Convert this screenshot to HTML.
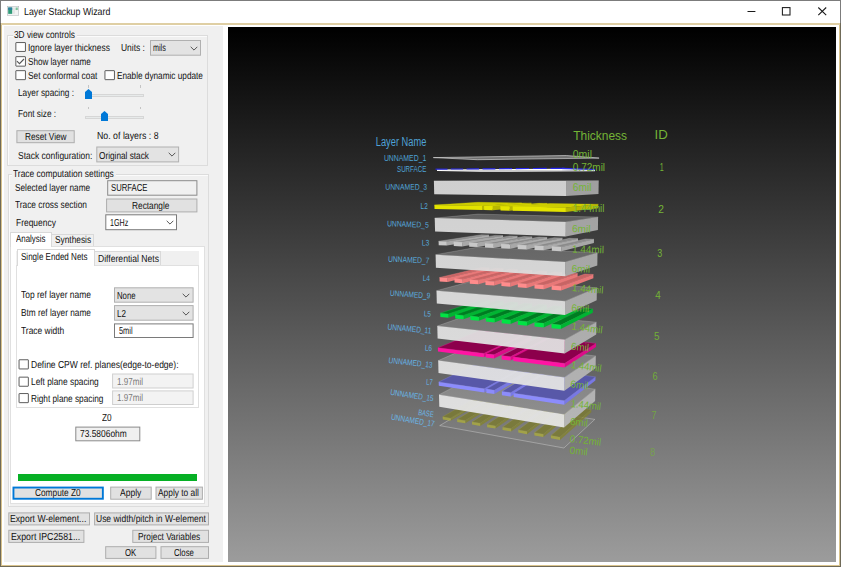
<!DOCTYPE html>
<html><head><meta charset="utf-8"><title>Layer Stackup Wizard</title>
<style>
html,body{margin:0;padding:0;}
body{width:841px;height:567px;position:relative;overflow:hidden;background:#fff;font-family:"Liberation Sans",sans-serif;}
.b{position:absolute;box-sizing:border-box;}
.t{position:absolute;white-space:nowrap;transform-origin:0 50%;display:block;line-height:12px;text-rendering:geometricPrecision;}
#frame{position:absolute;left:0;top:0;width:841px;height:567px;box-sizing:border-box;border:1px solid #7c7c7c;}
#client{position:absolute;left:0;top:23px;width:841px;height:544px;box-sizing:border-box;border:1px solid #6f6a58;box-shadow:inset 0 0 0 1px #d9c38c;}
#titleline{position:absolute;left:1px;top:23px;width:839px;height:2px;background:#dfcfa4;}
#panel{position:absolute;left:4.3px;top:26px;width:219.2px;height:536px;background:#f0f0f0;}
#view{position:absolute;left:228px;top:27px;width:608px;height:535px;background:linear-gradient(#000,#9c9c9c);}
.gb{border:1px solid #dcdcdc;box-shadow:inset 1px 1px 0 #fbfbfb;}
.combo{background:#e3e3e3;border:1px solid #b2b2b2;}
.btn{background:#e1e1e1;border:1px solid #adadad;}
.btn.focus{border:2px solid #0078d7;}
.edit{background:#fff;border:1px solid #7a7a7a;}
.ro{background:#f0f0f0;border:1px solid #8a8a8a;}
.dis{background:#f3f3f3;border:1px solid #cfcfcf;}
.cb{background:#fff;border:1px solid #505050;}
.pane{background:#fff;border:1px solid #e0e0e0;}
.tab{background:#f0f0f0;border:1px solid #d9d9d9;border-bottom:none;}
.tab.sel{background:#fff;}
svg text{font-family:"Liberation Sans",sans-serif;}
</style></head><body>
<div id="frame"></div><div id="client"></div><div id="titleline"></div>
<div id="panel"></div>
<div id="view"></div>
<svg class="b" style="left:7px;top:6.2px" width="12" height="9.6" viewBox="0 0 12 10" preserveAspectRatio="none">
<rect x="0.25" y="0.25" width="11.5" height="9.5" fill="#f2f4f4" stroke="#a8b0b4" stroke-width="0.5"/>
<rect x="1.2" y="1.6" width="4" height="6.6" fill="#2e9a78"/><rect x="1.2" y="1.6" width="4" height="2.5" fill="#2f7fa0"/>
<rect x="6" y="1.6" width="2" height="6.6" fill="#e4e6e6"/><rect x="8.6" y="1.6" width="2.2" height="2.6" fill="#7cc49a"/>
</svg>
<svg class="b" style="left:740px;top:0" width="100" height="23" viewBox="0 0 100 23">
<path d="M7.5 11.5 H15.4" stroke="#1a1a1a" stroke-width="1.05" fill="none"/>
<rect x="42.4" y="7.6" width="7.6" height="7.4" stroke="#1a1a1a" stroke-width="1.05" fill="none"/>
<path d="M78.3 7.5 L86.2 15.2 M86.2 7.5 L78.3 15.2" stroke="#1a1a1a" stroke-width="1.05" fill="none"/>
</svg>
<div class="b gb" style="left:7.0px;top:34.5px;width:201.0px;height:131.0px;"></div>
<div class="b " style="left:12.5px;top:30.0px;width:64.5px;height:10.0px;background:#f0f0f0"></div>
<div class="b " style="left:85.3px;top:93.9px;width:58.3px;height:3.1px;background:#e7eaea;border:1px solid #d6d6d6;box-sizing:border-box"></div>
<div class="b " style="left:88.0px;top:84.9px;width:0.7px;height:2.8px;background:#c4c4c4"></div>
<div class="b " style="left:140.0px;top:84.9px;width:0.7px;height:2.8px;background:#c4c4c4"></div>
<svg class="b" style="left:85.3px;top:88.9px" width="7" height="10.4" viewBox="0 0 7 10.4"><path d="M3.5 0 L7 3 V10.4 H0 V3 Z" fill="#0078d7"/></svg>
<div class="b " style="left:85.3px;top:115.6px;width:58.3px;height:3.1px;background:#e7eaea;border:1px solid #d6d6d6;box-sizing:border-box"></div>
<div class="b " style="left:88.0px;top:106.6px;width:0.7px;height:2.8px;background:#c4c4c4"></div>
<div class="b " style="left:140.0px;top:106.6px;width:0.7px;height:2.8px;background:#c4c4c4"></div>
<svg class="b" style="left:101.4px;top:110.6px" width="7" height="10.4" viewBox="0 0 7 10.4"><path d="M3.5 0 L7 3 V10.4 H0 V3 Z" fill="#0078d7"/></svg>
<div class="b gb" style="left:7.5px;top:173.8px;width:201.0px;height:333.7px;"></div>
<div class="b " style="left:11.5px;top:169.0px;width:104.5px;height:10.0px;background:#f0f0f0"></div>
<div class="b pane" style="left:9.6px;top:246.3px;width:195.8px;height:258.2px;"></div>
<div class="b tab sel" style="left:9.6px;top:231.6px;width:42.0px;height:15.7px;"></div>
<div class="b tab" style="left:51.4px;top:233.5px;width:42.9px;height:12.8px;"></div>
<div class="b " style="left:15.6px;top:251.0px;width:183.7px;height:14.3px;background:#f0f0f0"></div>
<div class="b pane" style="left:15.6px;top:264.8px;width:183.4px;height:143.4px;"></div>
<div class="b tab sel" style="left:17.0px;top:249.0px;width:77.5px;height:16.8px;"></div>
<div class="b tab" style="left:94.3px;top:251.3px;width:67.0px;height:13.5px;"></div>
<div class="b " style="left:18.0px;top:474.2px;width:179.0px;height:6.9px;background:#06b025"></div>
<svg class="b" style="left:0;top:0" width="841" height="567" viewBox="0 0 841 567">
<rect x="15.85" y="42.55" width="9.60" height="8.90" rx="0.3" fill="#fff" stroke="#4c4c4c" stroke-width="0.9"/>
<rect x="150.50" y="40.50" width="50.00" height="14.70" fill="#e3e3e3" stroke="#b0b0b0" stroke-width="1"/>
<rect x="15.85" y="56.65" width="9.60" height="9.50" rx="0.3" fill="#fff" stroke="#4c4c4c" stroke-width="0.9"/>
<path d="M16.90 61.20 L19.50 63.70 L24.00 59.00" fill="none" stroke="#555" stroke-width="1.1"/>
<rect x="15.85" y="70.65" width="9.60" height="9.00" rx="0.3" fill="#fff" stroke="#4c4c4c" stroke-width="0.9"/>
<rect x="104.95" y="70.65" width="9.50" height="9.00" rx="0.3" fill="#fff" stroke="#4c4c4c" stroke-width="0.9"/>
<rect x="16.90" y="130.70" width="57.30" height="12.00" fill="#e1e1e1" stroke="#adadad" stroke-width="1"/>
<rect x="96.80" y="147.00" width="81.80" height="14.90" fill="#e3e3e3" stroke="#b0b0b0" stroke-width="1"/>
<rect x="107.70" y="180.70" width="89.20" height="14.50" fill="#f0f0f0" stroke="#8a8a8a" stroke-width="1"/>
<rect x="106.60" y="199.00" width="90.30" height="12.90" fill="#e1e1e1" stroke="#adadad" stroke-width="1"/>
<rect x="105.80" y="214.80" width="70.70" height="14.90" fill="#fff" stroke="#7a7a7a" stroke-width="1"/>
<rect x="114.50" y="287.80" width="78.60" height="14.40" fill="#e3e3e3" stroke="#b0b0b0" stroke-width="1"/>
<rect x="114.50" y="305.60" width="78.60" height="14.60" fill="#e3e3e3" stroke="#b0b0b0" stroke-width="1"/>
<rect x="114.50" y="323.90" width="78.60" height="13.60" fill="#fff" stroke="#7a7a7a" stroke-width="1"/>
<rect x="19.05" y="359.75" width="9.30" height="9.20" rx="0.3" fill="#fff" stroke="#4c4c4c" stroke-width="0.9"/>
<rect x="19.05" y="377.15" width="9.30" height="9.10" rx="0.3" fill="#fff" stroke="#4c4c4c" stroke-width="0.9"/>
<rect x="112.60" y="374.00" width="80.50" height="14.00" fill="#f3f3f3" stroke="#cfcfcf" stroke-width="1"/>
<rect x="19.05" y="393.55" width="9.30" height="9.10" rx="0.3" fill="#fff" stroke="#4c4c4c" stroke-width="0.9"/>
<rect x="112.60" y="390.90" width="80.50" height="13.60" fill="#f3f3f3" stroke="#cfcfcf" stroke-width="1"/>
<rect x="75.80" y="427.10" width="64.00" height="13.70" fill="#f0f0f0" stroke="#8a8a8a" stroke-width="1"/>
<rect x="13.45" y="487.55" width="89.40" height="11.20" fill="#e1e1e1" stroke="#0078d7" stroke-width="1.9"/>
<rect x="110.70" y="487.10" width="40.50" height="12.10" fill="#e1e1e1" stroke="#adadad" stroke-width="1"/>
<rect x="156.00" y="487.10" width="46.40" height="12.10" fill="#e1e1e1" stroke="#adadad" stroke-width="1"/>
<rect x="8.80" y="512.90" width="80.70" height="12.00" fill="#e1e1e1" stroke="#adadad" stroke-width="1"/>
<rect x="94.60" y="512.90" width="113.90" height="12.00" fill="#e1e1e1" stroke="#adadad" stroke-width="1"/>
<rect x="8.80" y="530.30" width="75.10" height="12.10" fill="#e1e1e1" stroke="#adadad" stroke-width="1"/>
<rect x="132.80" y="530.30" width="75.70" height="12.10" fill="#e1e1e1" stroke="#adadad" stroke-width="1"/>
<rect x="105.70" y="546.70" width="50.20" height="11.70" fill="#e1e1e1" stroke="#adadad" stroke-width="1"/>
<rect x="161.00" y="546.70" width="47.50" height="11.70" fill="#e1e1e1" stroke="#adadad" stroke-width="1"/>
</svg>
<span class="t" style="left:23.6px;top:7px;font-size:10.3px;color:#111;transform:scaleX(0.8575);">Layer Stackup Wizard</span>
<span class="t" style="left:14.0px;top:30px;font-size:10.2px;color:#111;transform:scaleX(0.8152);">3D view controls</span>
<span class="t" style="left:28.2px;top:43px;font-size:10.2px;color:#111;transform:scaleX(0.8265);">Ignore layer thickness</span>
<span class="t" style="left:121.0px;top:43px;font-size:10.2px;color:#111;transform:scaleX(0.8303);">Units :</span>
<span class="t" style="left:152.6px;top:43px;font-size:10.2px;color:#111;transform:scaleX(0.7060);">mils</span>
<svg class="b" style="left:190.0px;top:45.7px" width="8" height="5" viewBox="0 0 8 5"><path d="M0.7 0.8 L4 4.1 L7.3 0.8" fill="none" stroke="#444" stroke-width="0.9"/></svg>
<span class="t" style="left:28.2px;top:57px;font-size:10.2px;color:#111;transform:scaleX(0.7969);">Show layer name</span>
<span class="t" style="left:28.2px;top:71px;font-size:10.2px;color:#111;transform:scaleX(0.8161);">Set conformal coat</span>
<span class="t" style="left:117.0px;top:71px;font-size:10.2px;color:#111;transform:scaleX(0.8067);">Enable dynamic update</span>
<span class="t" style="left:17.8px;top:88px;font-size:10.2px;color:#111;transform:scaleX(0.8095);">Layer spacing :</span>
<span class="t" style="left:17.8px;top:109px;font-size:10.2px;color:#111;transform:scaleX(0.8119);">Font size :</span>
<span class="t" style="left:24.6px;top:132px;font-size:10.2px;color:#111;transform:scaleX(0.8093);">Reset View</span>
<span class="t" style="left:97.0px;top:131px;font-size:10.2px;color:#111;transform:scaleX(0.8624);">No. of layers : 8</span>
<span class="t" style="left:17.8px;top:151px;font-size:10.2px;color:#111;transform:scaleX(0.8305);">Stack configuration:</span>
<span class="t" style="left:99.0px;top:151px;font-size:10.2px;color:#111;transform:scaleX(0.8092);">Original stack</span>
<svg class="b" style="left:168.3px;top:152.1px" width="8" height="5" viewBox="0 0 8 5"><path d="M0.7 0.8 L4 4.1 L7.3 0.8" fill="none" stroke="#444" stroke-width="0.9"/></svg>
<span class="t" style="left:13.1px;top:169px;font-size:10.2px;color:#111;transform:scaleX(0.8265);">Trace computation settings</span>
<span class="t" style="left:15.0px;top:183px;font-size:10.2px;color:#111;transform:scaleX(0.8087);">Selected layer name</span>
<span class="t" style="left:110.7px;top:183px;font-size:10.2px;color:#111;transform:scaleX(0.7555);">SURFACE</span>
<span class="t" style="left:15.0px;top:200px;font-size:10.2px;color:#111;transform:scaleX(0.8177);">Trace cross section</span>
<span class="t" style="left:132.0px;top:201px;font-size:10.2px;color:#111;transform:scaleX(0.8164);">Rectangle</span>
<span class="t" style="left:15.6px;top:218px;font-size:10.2px;color:#111;transform:scaleX(0.8279);">Frequency</span>
<span class="t" style="left:110.2px;top:218px;font-size:10.2px;color:#111;transform:scaleX(0.7019);">1GHz</span>
<svg class="b" style="left:166.2px;top:220.1px" width="8" height="5" viewBox="0 0 8 5"><path d="M0.7 0.8 L4 4.1 L7.3 0.8" fill="none" stroke="#444" stroke-width="0.9"/></svg>
<span class="t" style="left:15.6px;top:234px;font-size:10.2px;color:#111;transform:scaleX(0.7767);">Analysis</span>
<span class="t" style="left:54.7px;top:235px;font-size:10.2px;color:#111;transform:scaleX(0.8163);">Synthesis</span>
<span class="t" style="left:21.3px;top:252px;font-size:10.2px;color:#111;transform:scaleX(0.7894);">Single Ended Nets</span>
<span class="t" style="left:97.6px;top:254px;font-size:10.2px;color:#111;transform:scaleX(0.8428);">Differential Nets</span>
<span class="t" style="left:21.0px;top:290px;font-size:10.2px;color:#111;transform:scaleX(0.8286);">Top ref layer name</span>
<span class="t" style="left:116.8px;top:291px;font-size:10.2px;color:#111;transform:scaleX(0.7628);">None</span>
<svg class="b" style="left:182.3px;top:292.7px" width="8" height="5" viewBox="0 0 8 5"><path d="M0.7 0.8 L4 4.1 L7.3 0.8" fill="none" stroke="#444" stroke-width="0.9"/></svg>
<span class="t" style="left:21.0px;top:308px;font-size:10.2px;color:#111;transform:scaleX(0.8124);">Btm ref layer name</span>
<span class="t" style="left:116.8px;top:309px;font-size:10.2px;color:#111;transform:scaleX(0.7932);">L2</span>
<svg class="b" style="left:182.3px;top:310.7px" width="8" height="5" viewBox="0 0 8 5"><path d="M0.7 0.8 L4 4.1 L7.3 0.8" fill="none" stroke="#444" stroke-width="0.9"/></svg>
<span class="t" style="left:21.0px;top:326px;font-size:10.2px;color:#111;transform:scaleX(0.8273);">Trace width</span>
<span class="t" style="left:119.0px;top:326px;font-size:10.2px;color:#111;transform:scaleX(0.7272);">5mil</span>
<span class="t" style="left:30.6px;top:360px;font-size:10.2px;color:#111;transform:scaleX(0.8350);">Define CPW ref. planes(edge-to-edge):</span>
<span class="t" style="left:30.6px;top:377px;font-size:10.2px;color:#111;transform:scaleX(0.8189);">Left plane spacing</span>
<span class="t" style="left:117.0px;top:377px;font-size:10.2px;color:#7a7a7a;transform:scaleX(0.7907);">1.97mil</span>
<span class="t" style="left:30.6px;top:394px;font-size:10.2px;color:#111;transform:scaleX(0.8092);">Right plane spacing</span>
<span class="t" style="left:117.0px;top:393px;font-size:10.2px;color:#7a7a7a;transform:scaleX(0.7907);">1.97mil</span>
<span class="t" style="left:101.9px;top:413px;font-size:10.2px;color:#111;transform:scaleX(0.8065);">Z0</span>
<span class="t" style="left:79.7px;top:429px;font-size:10.2px;color:#111;transform:scaleX(0.8252);">73.5806ohm</span>
<span class="t" style="left:34.6px;top:488px;font-size:10.2px;color:#111;transform:scaleX(0.8142);">Compute Z0</span>
<span class="t" style="left:119.8px;top:488px;font-size:10.2px;color:#111;transform:scaleX(0.8387);">Apply</span>
<span class="t" style="left:158.3px;top:488px;font-size:10.2px;color:#111;transform:scaleX(0.8217);">Apply to all</span>
<span class="t" style="left:10.2px;top:514px;font-size:10.2px;color:#111;transform:scaleX(0.8494);">Export W-element...</span>
<span class="t" style="left:96.3px;top:514px;font-size:10.2px;color:#111;transform:scaleX(0.8332);">Use width/pitch in W-element</span>
<span class="t" style="left:11.0px;top:532px;font-size:10.2px;color:#111;transform:scaleX(0.8608);">Export IPC2581...</span>
<span class="t" style="left:138.4px;top:532px;font-size:10.2px;color:#111;transform:scaleX(0.8160);">Project Variables</span>
<span class="t" style="left:125.0px;top:548px;font-size:10.2px;color:#111;transform:scaleX(0.7600);">OK</span>
<span class="t" style="left:173.8px;top:548px;font-size:10.2px;color:#111;transform:scaleX(0.7631);">Close</span>
<svg class="b" style="left:0;top:0" width="841" height="567" viewBox="0 0 841 567">
<defs>
<linearGradient id="gTop" gradientUnits="userSpaceOnUse" x1="0" y1="27" x2="0" y2="562"><stop offset="0" stop-color="rgb(51,51,51)"/><stop offset="1" stop-color="rgb(176,176,176)"/></linearGradient>
<linearGradient id="gSide" gradientUnits="userSpaceOnUse" x1="0" y1="27" x2="0" y2="562"><stop offset="0" stop-color="rgb(145,145,145)"/><stop offset="1" stop-color="rgb(194,194,194)"/></linearGradient>
<linearGradient id="gFront" gradientUnits="userSpaceOnUse" x1="0" y1="27" x2="0" y2="562"><stop offset="0" stop-color="rgb(207,207,207)"/><stop offset="1" stop-color="rgb(237,237,237)"/></linearGradient>
</defs>
<g shape-rendering="geometricPrecision">
<polygon points="439.7,425.6 563.9,448.0 594.8,419.4 480.5,401.4" fill="rgba(255,255,255,0.05)" stroke="rgba(235,235,235,0.5)" stroke-width="0.7"/>
<g opacity="0.8">
<polygon points="442.7,416.8 450.6,418.2 490.6,394.4 483.4,393.3" fill="#7a7a2e" stroke="#acac3c" stroke-width="0.5" stroke-opacity="0.6"/>
<polygon points="450.6,418.2 490.6,394.4 490.7,396.8 450.6,420.8" fill="#84842e"/>
<polygon points="442.7,416.8 450.6,418.2 450.6,420.8 442.8,419.4" fill="#acac3c"/>
<polygon points="457.2,419.3 465.2,420.7 504.2,396.5 496.8,395.4" fill="#7a7a2e" stroke="#acac3c" stroke-width="0.5" stroke-opacity="0.6"/>
<polygon points="465.2,420.7 504.2,396.5 504.2,398.9 465.3,423.3" fill="#84842e"/>
<polygon points="457.2,419.3 465.2,420.7 465.3,423.3 457.2,421.9" fill="#acac3c"/>
<polygon points="472.0,421.9 480.2,423.3 518.0,398.6 510.5,397.5" fill="#7a7a2e" stroke="#acac3c" stroke-width="0.5" stroke-opacity="0.6"/>
<polygon points="480.2,423.3 518.0,398.6 518.0,401.0 480.2,425.9" fill="#84842e"/>
<polygon points="472.0,421.9 480.2,423.3 480.2,425.9 472.0,424.5" fill="#acac3c"/>
<polygon points="487.1,424.5 495.5,426.0 532.1,400.7 524.4,399.6" fill="#7a7a2e" stroke="#acac3c" stroke-width="0.5" stroke-opacity="0.6"/>
<polygon points="495.5,426.0 532.1,400.7 532.1,403.2 495.5,428.6" fill="#84842e"/>
<polygon points="487.1,424.5 495.5,426.0 495.5,428.6 487.1,427.2" fill="#acac3c"/>
<polygon points="502.5,427.2 511.1,428.7 546.5,402.9 538.6,401.7" fill="#7a7a2e" stroke="#acac3c" stroke-width="0.5" stroke-opacity="0.6"/>
<polygon points="511.1,428.7 546.5,402.9 546.5,405.4 511.1,431.4" fill="#84842e"/>
<polygon points="502.5,427.2 511.1,428.7 511.1,431.4 502.6,429.9" fill="#acac3c"/>
<polygon points="518.3,429.9 527.0,431.4 561.1,405.2 553.1,403.9" fill="#7a7a2e" stroke="#acac3c" stroke-width="0.5" stroke-opacity="0.6"/>
<polygon points="527.0,431.4 561.1,405.2 561.1,407.6 527.0,434.2" fill="#84842e"/>
<polygon points="518.3,429.9 527.0,431.4 527.0,434.2 518.3,432.6" fill="#acac3c"/>
<polygon points="534.4,432.7 543.4,434.3 576.1,407.4 567.9,406.2" fill="#7a7a2e" stroke="#acac3c" stroke-width="0.5" stroke-opacity="0.6"/>
<polygon points="543.4,434.3 576.1,407.4 576.1,409.9 543.3,437.0" fill="#84842e"/>
<polygon points="534.4,432.7 543.4,434.3 543.3,437.0 534.4,435.4" fill="#acac3c"/>
<polygon points="550.9,435.6 560.0,437.2 591.3,409.7 583.0,408.5" fill="#7a7a2e" stroke="#acac3c" stroke-width="0.5" stroke-opacity="0.6"/>
<polygon points="560.0,437.2 591.3,409.7 591.3,412.2 560.0,439.9" fill="#84842e"/>
<polygon points="550.9,435.6 560.0,437.2 560.0,439.9 550.9,438.3" fill="#acac3c"/>
</g>
<polygon points="439.0,394.7 564.2,414.5 595.3,389.2 480.1,373.4" fill="url(#gTop)" stroke="rgba(255,255,255,0.30)" stroke-width="0.6"/>
<polygon points="564.2,414.5 595.3,389.2 595.1,401.1 564.1,427.6" fill="url(#gSide)"/>
<polygon points="439.0,394.7 564.2,414.5 564.1,427.6 439.3,406.8" fill="url(#gFront)" opacity="0.95"/>
<polygon points="438.7,382.0 484.2,388.8 522.1,367.3 480.0,361.9" fill="#5858a8" stroke="#8c8cfc" stroke-width="0.5" stroke-opacity="0.6"/>
<polygon points="484.2,388.8 522.1,367.3 522.1,370.8 484.3,392.6" fill="#7878e4"/>
<polygon points="438.7,382.0 484.2,388.8 484.3,392.6 438.8,385.7" fill="#8c8cfc"/>
<polygon points="486.3,389.1 494.4,390.3 531.4,368.6 524.0,367.6" fill="#5858a8" stroke="#8c8cfc" stroke-width="0.5" stroke-opacity="0.6"/>
<polygon points="494.4,390.3 531.4,368.6 531.4,372.0 494.4,394.1" fill="#7878e4"/>
<polygon points="486.3,389.1 494.4,390.3 494.4,394.1 486.4,392.9" fill="#8c8cfc"/>
<polygon points="501.9,391.4 510.7,392.7 546.5,370.5 538.3,369.5" fill="#5858a8" stroke="#8c8cfc" stroke-width="0.5" stroke-opacity="0.6"/>
<polygon points="510.7,392.7 546.5,370.5 546.5,374.0 510.8,396.6" fill="#7878e4"/>
<polygon points="501.9,391.4 510.7,392.7 510.8,396.6 501.9,395.2" fill="#8c8cfc"/>
<polygon points="513.6,393.2 564.3,400.7 595.5,376.9 549.1,370.9" fill="#5858a8" stroke="#8c8cfc" stroke-width="0.5" stroke-opacity="0.6"/>
<polygon points="564.3,400.7 595.5,376.9 595.4,380.5 564.3,404.7" fill="#7878e4"/>
<polygon points="513.6,393.2 564.3,400.7 564.3,404.7 513.6,397.0" fill="#8c8cfc"/>
<polygon points="438.2,360.6 564.5,377.4 595.8,356.0 479.7,342.5" fill="url(#gTop)" stroke="rgba(255,255,255,0.30)" stroke-width="0.6"/>
<polygon points="564.5,377.4 595.8,356.0 595.6,368.0 564.4,390.8" fill="url(#gSide)"/>
<polygon points="438.2,360.6 564.5,377.4 564.4,390.8 438.5,373.0" fill="url(#gFront)" opacity="0.95"/>
<polygon points="437.9,347.8 483.8,353.4 522.0,335.4 479.6,330.8" fill="#8c004c" stroke="#ff14a4" stroke-width="0.5" stroke-opacity="0.6"/>
<polygon points="483.8,353.4 522.0,335.4 522.0,338.9 483.8,357.3" fill="#dc0c88"/>
<polygon points="437.9,347.8 483.8,353.4 483.8,357.3 438.0,351.5" fill="#ff14a4"/>
<polygon points="485.9,353.7 494.0,354.7 531.4,336.4 523.9,335.6" fill="#8c004c" stroke="#ff14a4" stroke-width="0.5" stroke-opacity="0.6"/>
<polygon points="494.0,354.7 531.4,336.4 531.4,339.9 494.1,358.6" fill="#dc0c88"/>
<polygon points="485.9,353.7 494.0,354.7 494.1,358.6 485.9,357.5" fill="#ff14a4"/>
<polygon points="501.6,355.6 510.5,356.7 546.6,338.1 538.4,337.2" fill="#8c004c" stroke="#ff14a4" stroke-width="0.5" stroke-opacity="0.6"/>
<polygon points="510.5,356.7 546.6,338.1 546.6,341.6 510.6,360.6" fill="#dc0c88"/>
<polygon points="501.6,355.6 510.5,356.7 510.6,360.6 501.6,359.5" fill="#ff14a4"/>
<polygon points="513.4,357.1 564.6,363.4 596.0,343.4 549.2,338.4" fill="#8c004c" stroke="#ff14a4" stroke-width="0.5" stroke-opacity="0.6"/>
<polygon points="564.6,363.4 596.0,343.4 596.0,347.1 564.6,367.5" fill="#dc0c88"/>
<polygon points="513.4,357.1 564.6,363.4 564.6,367.5 513.4,361.0" fill="#ff14a4"/>
<polygon points="437.3,326.0 564.8,339.7 596.4,322.2 479.3,311.2" fill="url(#gTop)" stroke="rgba(255,255,255,0.30)" stroke-width="0.6"/>
<polygon points="564.8,339.7 596.4,322.2 596.2,334.4 564.7,353.4" fill="url(#gSide)"/>
<polygon points="437.3,326.0 564.8,339.7 564.7,353.4 437.6,338.5" fill="url(#gFront)" opacity="0.95"/>
<polygon points="440.3,313.2 448.3,314.0 489.6,300.2 482.2,299.6" fill="#007c22" stroke="#00e444" stroke-width="0.5" stroke-opacity="0.6"/>
<polygon points="448.3,314.0 489.6,300.2 489.7,303.7 448.4,317.8" fill="#00b432"/>
<polygon points="440.3,313.2 448.3,314.0 448.4,317.8 440.4,317.0" fill="#00e444"/>
<polygon points="455.2,314.6 463.4,315.4 503.5,301.4 495.9,300.8" fill="#007c22" stroke="#00e444" stroke-width="0.5" stroke-opacity="0.6"/>
<polygon points="463.4,315.4 503.5,301.4 503.5,304.9 463.4,319.3" fill="#00b432"/>
<polygon points="455.2,314.6 463.4,315.4 463.4,319.3 455.2,318.5" fill="#00e444"/>
<polygon points="470.3,316.1 478.7,316.9 517.7,302.6 509.9,302.0" fill="#007c22" stroke="#00e444" stroke-width="0.5" stroke-opacity="0.6"/>
<polygon points="478.7,316.9 517.7,302.6 517.7,306.1 478.8,320.8" fill="#00b432"/>
<polygon points="470.3,316.1 478.7,316.9 478.8,320.8 470.4,320.0" fill="#00e444"/>
<polygon points="485.8,317.6 494.4,318.5 532.1,303.9 524.2,303.2" fill="#007c22" stroke="#00e444" stroke-width="0.5" stroke-opacity="0.6"/>
<polygon points="494.4,318.5 532.1,303.9 532.1,307.4 494.5,322.4" fill="#00b432"/>
<polygon points="485.8,317.6 494.4,318.5 494.5,322.4 485.9,321.6" fill="#00e444"/>
<polygon points="501.7,319.2 510.5,320.0 546.9,305.1 538.8,304.4" fill="#007c22" stroke="#00e444" stroke-width="0.5" stroke-opacity="0.6"/>
<polygon points="510.5,320.0 546.9,305.1 546.8,308.7 510.5,324.0" fill="#00b432"/>
<polygon points="501.7,319.2 510.5,320.0 510.5,324.0 501.7,323.2" fill="#00e444"/>
<polygon points="517.9,320.8 526.9,321.7 561.9,306.4 553.7,305.7" fill="#007c22" stroke="#00e444" stroke-width="0.5" stroke-opacity="0.6"/>
<polygon points="526.9,321.7 561.9,306.4 561.9,310.0 526.9,325.7" fill="#00b432"/>
<polygon points="517.9,320.8 526.9,321.7 526.9,325.7 517.9,324.8" fill="#00e444"/>
<polygon points="534.5,322.4 543.7,323.3 577.2,307.7 568.8,307.0" fill="#007c22" stroke="#00e444" stroke-width="0.5" stroke-opacity="0.6"/>
<polygon points="543.7,323.3 577.2,307.7 577.2,311.4 543.7,327.4" fill="#00b432"/>
<polygon points="534.5,322.4 543.7,323.3 543.7,327.4 534.5,326.5" fill="#00e444"/>
<polygon points="551.5,324.1 560.9,325.0 592.9,309.1 584.3,308.3" fill="#007c22" stroke="#00e444" stroke-width="0.5" stroke-opacity="0.6"/>
<polygon points="560.9,325.0 592.9,309.1 592.8,312.7 560.8,329.1" fill="#00b432"/>
<polygon points="551.5,324.1 560.9,325.0 560.8,329.1 551.5,328.2" fill="#00e444"/>
<polygon points="436.5,290.7 565.1,301.2 596.9,287.8 478.9,279.3" fill="url(#gTop)" stroke="rgba(255,255,255,0.30)" stroke-width="0.6"/>
<polygon points="565.1,301.2 596.9,287.8 596.7,300.2 565.0,315.1" fill="url(#gSide)"/>
<polygon points="436.5,290.7 565.1,301.2 565.0,315.1 436.8,303.4" fill="url(#gFront)" opacity="0.95"/>
<polygon points="439.5,277.5 447.6,278.1 489.3,267.9 481.8,267.5" fill="#c86464" stroke="#ff8c8c" stroke-width="0.5" stroke-opacity="0.6"/>
<polygon points="447.6,278.1 489.3,267.9 489.3,271.4 447.7,282.0" fill="#e87878"/>
<polygon points="439.5,277.5 447.6,278.1 447.7,282.0 439.6,281.4" fill="#ff8c8c"/>
<polygon points="454.5,278.6 462.7,279.2 503.3,268.8 495.6,268.3" fill="#c86464" stroke="#ff8c8c" stroke-width="0.5" stroke-opacity="0.6"/>
<polygon points="462.7,279.2 503.3,268.8 503.3,272.4 462.8,283.2" fill="#e87878"/>
<polygon points="454.5,278.6 462.7,279.2 462.8,283.2 454.5,282.5" fill="#ff8c8c"/>
<polygon points="469.8,279.7 478.2,280.3 517.6,269.7 509.7,269.2" fill="#c86464" stroke="#ff8c8c" stroke-width="0.5" stroke-opacity="0.6"/>
<polygon points="478.2,280.3 517.6,269.7 517.6,273.3 478.3,284.3" fill="#e87878"/>
<polygon points="469.8,279.7 478.2,280.3 478.3,284.3 469.8,283.7" fill="#ff8c8c"/>
<polygon points="485.4,280.9 494.1,281.5 532.1,270.6 524.2,270.1" fill="#c86464" stroke="#ff8c8c" stroke-width="0.5" stroke-opacity="0.6"/>
<polygon points="494.1,281.5 532.1,270.6 532.1,274.2 494.1,285.5" fill="#e87878"/>
<polygon points="485.4,280.9 494.1,281.5 494.1,285.5 485.5,284.9" fill="#ff8c8c"/>
<polygon points="501.4,282.0 510.3,282.7 547.0,271.6 538.9,271.1" fill="#c86464" stroke="#ff8c8c" stroke-width="0.5" stroke-opacity="0.6"/>
<polygon points="510.3,282.7 547.0,271.6 547.0,275.2 510.3,286.7" fill="#e87878"/>
<polygon points="501.4,282.0 510.3,282.7 510.3,286.7 501.4,286.1" fill="#ff8c8c"/>
<polygon points="517.8,283.2 526.8,283.9 562.1,272.5 553.9,272.0" fill="#c86464" stroke="#ff8c8c" stroke-width="0.5" stroke-opacity="0.6"/>
<polygon points="526.8,283.9 562.1,272.5 562.1,276.2 526.8,288.0" fill="#e87878"/>
<polygon points="517.8,283.2 526.8,283.9 526.8,288.0 517.8,287.3" fill="#ff8c8c"/>
<polygon points="534.5,284.4 543.8,285.1 577.6,273.5 569.2,273.0" fill="#c86464" stroke="#ff8c8c" stroke-width="0.5" stroke-opacity="0.6"/>
<polygon points="543.8,285.1 577.6,273.5 577.6,277.2 543.8,289.2" fill="#e87878"/>
<polygon points="534.5,284.4 543.8,285.1 543.8,289.2 534.5,288.5" fill="#ff8c8c"/>
<polygon points="551.7,285.6 561.2,286.3 593.4,274.5 584.8,274.0" fill="#c86464" stroke="#ff8c8c" stroke-width="0.5" stroke-opacity="0.6"/>
<polygon points="561.2,286.3 593.4,274.5 593.4,278.3 561.1,290.5" fill="#e87878"/>
<polygon points="551.7,285.6 561.2,286.3 561.1,290.5 551.6,289.8" fill="#ff8c8c"/>
<polygon points="435.6,254.7 565.4,262.0 597.5,252.7 478.4,247.0" fill="url(#gTop)" stroke="rgba(255,255,255,0.30)" stroke-width="0.6"/>
<polygon points="565.4,262.0 597.5,252.7 597.3,265.4 565.3,276.2" fill="url(#gSide)"/>
<polygon points="435.6,254.7 565.4,262.0 565.3,276.2 435.9,267.7" fill="url(#gFront)" opacity="0.95"/>
<polygon points="438.6,241.3 446.8,241.6 488.9,235.1 481.4,234.8" fill="#8a8a8a" stroke="#c8c8c8" stroke-width="0.5" stroke-opacity="0.6"/>
<polygon points="446.8,241.6 488.9,235.1 489.0,238.7 446.9,245.6" fill="#a8a8a8"/>
<polygon points="438.6,241.3 446.8,241.6 446.9,245.6 438.7,245.2" fill="#c8c8c8"/>
<polygon points="453.7,242.0 462.1,242.3 503.0,235.7 495.3,235.4" fill="#8a8a8a" stroke="#c8c8c8" stroke-width="0.5" stroke-opacity="0.6"/>
<polygon points="462.1,242.3 503.0,235.7 503.1,239.3 462.2,246.4" fill="#a8a8a8"/>
<polygon points="453.7,242.0 462.1,242.3 462.2,246.4 453.8,245.9" fill="#c8c8c8"/>
<polygon points="469.2,242.7 477.7,243.1 517.4,236.3 509.6,236.0" fill="#8a8a8a" stroke="#c8c8c8" stroke-width="0.5" stroke-opacity="0.6"/>
<polygon points="477.7,243.1 517.4,236.3 517.4,239.9 477.8,247.1" fill="#a8a8a8"/>
<polygon points="469.2,242.7 477.7,243.1 477.8,247.1 469.2,246.7" fill="#c8c8c8"/>
<polygon points="485.0,243.4 493.7,243.8 532.1,236.9 524.1,236.5" fill="#8a8a8a" stroke="#c8c8c8" stroke-width="0.5" stroke-opacity="0.6"/>
<polygon points="493.7,243.8 532.1,236.9 532.1,240.5 493.8,247.9" fill="#a8a8a8"/>
<polygon points="485.0,243.4 493.7,243.8 493.8,247.9 485.0,247.5" fill="#c8c8c8"/>
<polygon points="501.1,244.1 510.1,244.5 547.1,237.5 538.9,237.1" fill="#8a8a8a" stroke="#c8c8c8" stroke-width="0.5" stroke-opacity="0.6"/>
<polygon points="510.1,244.5 547.1,237.5 547.1,241.2 510.1,248.7" fill="#a8a8a8"/>
<polygon points="501.1,244.1 510.1,244.5 510.1,248.7 501.2,248.3" fill="#c8c8c8"/>
<polygon points="517.6,244.9 526.8,245.3 562.4,238.1 554.0,237.7" fill="#8a8a8a" stroke="#c8c8c8" stroke-width="0.5" stroke-opacity="0.6"/>
<polygon points="526.8,245.3 562.4,238.1 562.4,241.8 526.8,249.5" fill="#a8a8a8"/>
<polygon points="517.6,244.9 526.8,245.3 526.8,249.5 517.7,249.1" fill="#c8c8c8"/>
<polygon points="534.6,245.7 543.9,246.1 578.0,238.7 569.5,238.3" fill="#8a8a8a" stroke="#c8c8c8" stroke-width="0.5" stroke-opacity="0.6"/>
<polygon points="543.9,246.1 578.0,238.7 578.0,242.5 543.9,250.3" fill="#a8a8a8"/>
<polygon points="534.6,245.7 543.9,246.1 543.9,250.3 534.5,249.9" fill="#c8c8c8"/>
<polygon points="551.9,246.5 561.4,246.9 594.0,239.3 585.3,239.0" fill="#8a8a8a" stroke="#c8c8c8" stroke-width="0.5" stroke-opacity="0.6"/>
<polygon points="561.4,246.9 594.0,239.3 593.9,243.1 561.4,251.2" fill="#a8a8a8"/>
<polygon points="551.9,246.5 561.4,246.9 561.4,251.2 551.8,250.7" fill="#c8c8c8"/>
<polygon points="434.7,218.1 565.8,221.9 598.1,217.1 478.0,214.1" fill="url(#gTop)" stroke="rgba(255,255,255,0.30)" stroke-width="0.6"/>
<polygon points="565.8,221.9 598.1,217.1 597.9,230.0 565.7,236.4" fill="url(#gSide)"/>
<polygon points="434.7,218.1 565.8,221.9 565.7,236.4 435.1,231.4" fill="url(#gFront)" opacity="0.95"/>
<polygon points="434.4,205.0 482.0,205.9 521.7,203.0 477.8,202.3" fill="#cccc00" stroke="#e4e400" stroke-width="0.5" stroke-opacity="0.6"/>
<polygon points="482.0,205.9 521.7,203.0 521.7,206.7 482.0,210.1" fill="#b8b800"/>
<polygon points="434.4,205.0 482.0,205.9 482.0,210.1 434.5,209.0" fill="#e4e400"/>
<polygon points="484.1,206.0 492.6,206.1 531.4,203.2 523.7,203.0" fill="#cccc00" stroke="#e4e400" stroke-width="0.5" stroke-opacity="0.6"/>
<polygon points="492.6,206.1 531.4,203.2 531.4,206.9 492.6,210.3" fill="#b8b800"/>
<polygon points="484.1,206.0 492.6,206.1 492.6,210.3 484.2,210.1" fill="#e4e400"/>
<polygon points="500.4,206.3 509.7,206.4 547.1,203.4 538.6,203.3" fill="#cccc00" stroke="#e4e400" stroke-width="0.5" stroke-opacity="0.6"/>
<polygon points="509.7,206.4 547.1,203.4 547.1,207.2 509.7,210.7" fill="#b8b800"/>
<polygon points="500.4,206.3 509.7,206.4 509.7,210.7 500.5,210.5" fill="#e4e400"/>
<polygon points="512.7,206.5 565.9,207.5 598.3,204.3 549.8,203.5" fill="#cccc00" stroke="#e4e400" stroke-width="0.5" stroke-opacity="0.6"/>
<polygon points="565.9,207.5 598.3,204.3 598.2,208.2 565.9,211.9" fill="#b8b800"/>
<polygon points="512.7,206.5 565.9,207.5 565.9,211.9 512.7,210.7" fill="#e4e400"/>
<polygon points="433.9,180.9 566.1,181.1 598.7,180.8 477.5,180.6" fill="url(#gTop)" stroke="rgba(255,255,255,0.30)" stroke-width="0.6"/>
<polygon points="566.1,181.1 598.7,180.8 598.5,193.9 566.0,195.9" fill="url(#gSide)"/>
<polygon points="433.9,180.9 566.1,181.1 566.0,195.9 434.2,194.3" fill="url(#gFront)" opacity="0.95"/>
<polygon points="437.0,171.0 562.0,170.3 595.0,171.2 480.6,171.8" fill="#ffffff"/>
<polygon points="562.0,168.7 595.0,169.8 595.0,171.2 562.0,170.3" fill="#e8e8f8"/>
<polygon points="437.0,169.5 562.0,168.7 562.0,170.3 437.0,171.0" fill="#ffffff"/>
<polygon points="435.5,168.6 447.5,168.6 447.5,169.7 435.5,169.7" fill="#2828f0"/>
<polygon points="450.8,168.5 463.1,168.4 463.1,169.6 450.8,169.6" fill="#2828f0"/>
<polygon points="466.5,168.4 479.0,168.3 479.1,169.5 466.5,169.5" fill="#2828f0"/>
<polygon points="482.5,168.3 495.4,168.2 495.4,169.4 482.6,169.4" fill="#2828f0"/>
<polygon points="498.9,168.2 512.1,168.1 512.1,169.3 499.0,169.3" fill="#2828f0"/>
<polygon points="515.7,168.1 529.2,168.0 529.2,169.1 515.7,169.2" fill="#2828f0"/>
<polygon points="532.9,167.9 546.7,167.8 546.7,169.0 532.9,169.1" fill="#2828f0"/>
<polygon points="550.5,167.8 564.6,167.7 564.6,168.9 550.5,169.0" fill="#2828f0"/>
<polygon points="562.0,167.7 595.1,168.9 595.0,170.0 562.0,168.9" fill="#3030f0"/>
<polygon points="433.3,157.6 566.3,155.5 599.1,158.1 477.3,159.7" fill="rgba(255,255,255,0.35)" stroke="rgba(235,235,235,0.8)" stroke-width="0.7"/>
</g>
<g>
<text x="375.8" y="145.7" font-size="12" fill="#4ea2d6" textLength="50.5" lengthAdjust="spacingAndGlyphs">Layer Name</text>
<text x="383.9" y="161.0" font-size="8.2" fill="#4ea2d4" textLength="42.4" lengthAdjust="spacingAndGlyphs">UNNAMED_1</text>
<text x="397.0" y="172.2" font-size="8.2" fill="#4fa3d5" textLength="29.3" lengthAdjust="spacingAndGlyphs">SURFACE</text>
<text x="385.3" y="189.7" font-size="8.2" fill="#51a4d6" textLength="41.8" lengthAdjust="spacingAndGlyphs" transform="rotate(0.27 385.3 189.7)">UNNAMED_3</text>
<text x="420.6" y="209.0" font-size="8.2" fill="#54a6d7" textLength="7.1" lengthAdjust="spacingAndGlyphs">L2</text>
<text x="386.9" y="226.3" font-size="8.2" fill="#56a7d9" textLength="41.8" lengthAdjust="spacingAndGlyphs" transform="rotate(1.92 386.9 226.3)">UNNAMED_5</text>
<text x="421.7" y="245.5" font-size="8.2" fill="#58a8da" textLength="7.6" lengthAdjust="spacingAndGlyphs" transform="rotate(0.75 421.7 245.5)">L3</text>
<text x="387.9" y="261.7" font-size="8.2" fill="#5aaadb" textLength="41.4" lengthAdjust="spacingAndGlyphs" transform="rotate(2.21 387.9 261.7)">UNNAMED_7</text>
<text x="422.7" y="280.9" font-size="8.2" fill="#5cabdc" textLength="7.3" lengthAdjust="spacingAndGlyphs" transform="rotate(0.78 422.7 280.9)">L4</text>
<text x="389.7" y="295.8" font-size="8.2" fill="#5dacdd" textLength="40.5" lengthAdjust="spacingAndGlyphs" transform="rotate(3.96 389.7 295.8)">UNNAMED_9</text>
<text x="423.7" y="316.3" font-size="8.2" fill="#60aedf" textLength="7.1" lengthAdjust="spacingAndGlyphs" transform="rotate(2.42 423.7 316.3)">L5</text>
<text x="387.3" y="329.5" font-size="8.2" fill="#61afe0" textLength="44.1" lengthAdjust="spacingAndGlyphs" transform="rotate(5.34 387.3 329.5)">UNNAMED_11</text>
<text x="424.7" y="350.6" font-size="8.2" fill="#64b0e1" textLength="7.1" lengthAdjust="spacingAndGlyphs" transform="rotate(3.22 424.7 350.6)">L6</text>
<text x="388.3" y="362.9" font-size="8.2" fill="#65b1e2" textLength="44.2" lengthAdjust="spacingAndGlyphs" transform="rotate(6.50 388.3 362.9)">UNNAMED_13</text>
<text x="426.1" y="384.5" font-size="8.2" fill="#67b3e3" textLength="6.3" lengthAdjust="spacingAndGlyphs" transform="rotate(4.54 426.1 384.5)">L7</text>
<text x="389.9" y="394.8" font-size="8.2" fill="#69b4e4" textLength="43.8" lengthAdjust="spacingAndGlyphs" transform="rotate(8.67 389.9 394.8)">UNNAMED_15</text>
<text x="418.0" y="415.0" font-size="8.2" fill="#6bb5e5" textLength="15.4" lengthAdjust="spacingAndGlyphs" transform="rotate(8.24 418.0 415.0)">BASE</text>
<text x="390.7" y="419.6" font-size="8.2" fill="#6bb6e6" textLength="44.1" lengthAdjust="spacingAndGlyphs" transform="rotate(9.27 390.7 419.6)">UNNAMED_17</text>
<text x="573.2" y="140.2" font-size="13.5" fill="#74b436" textLength="53.8" lengthAdjust="spacingAndGlyphs">Thickness</text>
<text x="654.6" y="138.6" font-size="13.5" fill="#74b436" textLength="13.2" lengthAdjust="spacingAndGlyphs">ID</text>
<text x="572.8" y="157.8" font-size="10.3" fill="#74b436" textLength="19.2" lengthAdjust="spacingAndGlyphs">0mil</text>
<text x="572.8" y="170.5" font-size="10.3" fill="#74b436" textLength="32.3" lengthAdjust="spacingAndGlyphs">0.72mil</text>
<text x="572.8" y="190.7" font-size="10.3" fill="#74b436" textLength="18.6" lengthAdjust="spacingAndGlyphs">6mil</text>
<text x="572.8" y="212.0" font-size="10.3" fill="#74b436" textLength="31.7" lengthAdjust="spacingAndGlyphs">1.44mil</text>
<text x="572.0" y="232.0" font-size="10.3" fill="#74b436" textLength="18.4" lengthAdjust="spacingAndGlyphs" transform="rotate(1.87 572.0 232.0)">6mil</text>
<text x="572.0" y="252.6" font-size="10.3" fill="#74b436" textLength="32.0" lengthAdjust="spacingAndGlyphs" transform="rotate(1.43 572.0 252.6)">1.44mil</text>
<text x="571.5" y="272.0" font-size="10.3" fill="#74b436" textLength="18.5" lengthAdjust="spacingAndGlyphs" transform="rotate(2.48 571.5 272.0)">6mil</text>
<text x="571.8" y="291.1" font-size="10.3" fill="#74b436" textLength="31.4" lengthAdjust="spacingAndGlyphs" transform="rotate(4.75 571.8 291.1)">1.44mil</text>
<text x="571.2" y="311.3" font-size="10.3" fill="#74b436" textLength="17.8" lengthAdjust="spacingAndGlyphs" transform="rotate(3.22 571.2 311.3)">6mil</text>
<text x="571.2" y="329.5" font-size="10.3" fill="#74b436" textLength="31.1" lengthAdjust="spacingAndGlyphs" transform="rotate(7.58 571.2 329.5)">1.44mil</text>
<text x="570.8" y="349.7" font-size="10.3" fill="#74b436" textLength="17.8" lengthAdjust="spacingAndGlyphs" transform="rotate(4.84 570.8 349.7)">6mil</text>
<text x="570.8" y="367.9" font-size="10.3" fill="#74b436" textLength="30.5" lengthAdjust="spacingAndGlyphs" transform="rotate(7.73 570.8 367.9)">1.44mil</text>
<text x="570.1" y="387.3" font-size="10.3" fill="#74b436" textLength="18.0" lengthAdjust="spacingAndGlyphs" transform="rotate(6.38 570.1 387.3)">6mil</text>
<text x="570.5" y="406.9" font-size="10.3" fill="#74b436" textLength="30.2" lengthAdjust="spacingAndGlyphs" transform="rotate(6.09 570.5 406.9)">1.44mil</text>
<text x="569.7" y="424.7" font-size="10.3" fill="#74b436" textLength="17.9" lengthAdjust="spacingAndGlyphs" transform="rotate(6.41 569.7 424.7)">6mil</text>
<text x="569.3" y="441.9" font-size="10.3" fill="#74b436" textLength="31.5" lengthAdjust="spacingAndGlyphs" transform="rotate(7.31 569.3 441.9)">0.72mil</text>
<text x="569.3" y="453.4" font-size="10.3" fill="#74b436" textLength="18.1" lengthAdjust="spacingAndGlyphs" transform="rotate(6.34 569.3 453.4)">0mil</text>
<text x="659.7" y="170.5" font-size="10.3" fill="#74b436" textLength="4.0" lengthAdjust="spacingAndGlyphs">1</text>
<text x="658.3" y="213.2" font-size="10.3" fill="#74b436" textLength="5.7" lengthAdjust="spacingAndGlyphs">2</text>
<text x="657.3" y="256.6" font-size="10.3" fill="#74b436" textLength="5.0" lengthAdjust="spacingAndGlyphs">3</text>
<text x="655.2" y="298.6" font-size="10.3" fill="#74b436" textLength="5.5" lengthAdjust="spacingAndGlyphs">4</text>
<text x="654.0" y="340.0" font-size="10.3" fill="#74b436" textLength="5.5" lengthAdjust="spacingAndGlyphs" opacity="0.95">5</text>
<text x="652.6" y="379.6" font-size="10.3" fill="#74b436" textLength="5.1" lengthAdjust="spacingAndGlyphs" opacity="0.9">6</text>
<text x="651.6" y="418.6" font-size="10.3" fill="#74b436" textLength="5.0" lengthAdjust="spacingAndGlyphs" opacity="0.8">7</text>
<text x="650.0" y="456.4" font-size="10.3" fill="#74b436" textLength="5.2" lengthAdjust="spacingAndGlyphs" opacity="0.65">8</text>
</g>
</svg>
</body></html>
